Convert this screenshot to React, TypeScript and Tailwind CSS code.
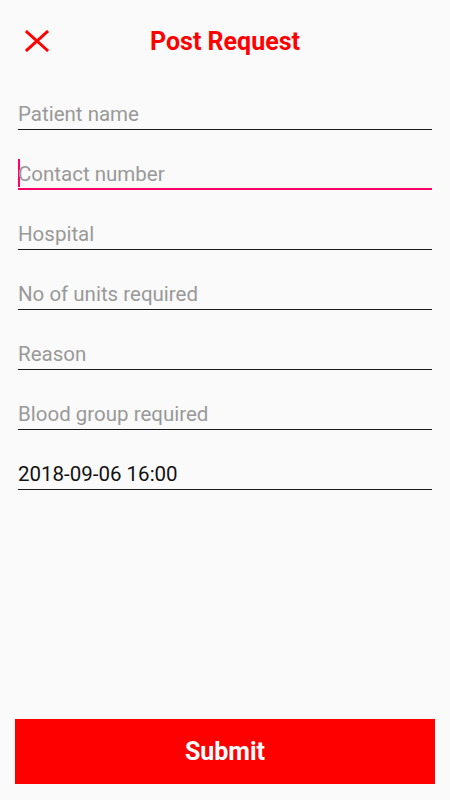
import React from "react"

const Fields = [
    { label: "Patient name", placeholder: true },
    { label: "Contact number", placeholder: true, focused: true },
    { label: "Hospital", placeholder: true },
    { label: "No of units required", placeholder: true },
    { label: "Reason", placeholder: true },
    { label: "Blood group required", placeholder: true },
    { label: "2018-09-06 16:00", placeholder: false },
]

const CloseIcon = () => (
    <svg width="24" height="22" viewBox="0 0 24 22" fill="none">
        <path d="M2 2 L22 20 M22 2 L2 20" stroke="#ff0000" strokeWidth="3" strokeLinecap="square" />
    </svg>
)

const App = () => {
    return (
        <div className="flex h-[800px] flex-col bg-[#fafafa] font-['Roboto',sans-serif]">
            <div className="grid h-[70px] grid-cols-[1fr_auto_1fr] items-start pt-[27px]">
                <div className="pl-[25px] pt-[3px]">
                    <CloseIcon />
                </div>
                <h1 className="text-[25px] leading-[29px] font-bold text-[#ff0000]">Post Request</h1>
                <div />
            </div>
            <div className="flex flex-col">
                {Fields.map((f, i) => (
                    <div
                        key={i}
                        className={
                            f.focused
                                ? "mx-[18px] flex h-[60px] items-end border-b-2 border-[#ff0066] pb-[2px]"
                                : "mx-[18px] flex h-[60px] items-end border-b border-[#1a1a1a] pb-[3px]"
                        }
                    >
                        {f.focused && <span className="mb-[-1px] mr-[-2px] h-[28px] w-[2px] bg-[#ff0066]" />}
                        <span
                            className={
                                f.placeholder
                                    ? "text-[20.5px] leading-[24px] text-[#999999]"
                                    : "text-[20.5px] leading-[24px] text-[#111111]"
                            }
                        >
                            {f.label}
                        </span>
                    </div>
                ))}
            </div>
            <button className="mx-[15px] mt-auto mb-[16px] flex h-[65px] items-center justify-center bg-[#ff0000] text-[25px] font-bold text-white">
                Submit
            </button>
        </div>
    )
}

export default App
